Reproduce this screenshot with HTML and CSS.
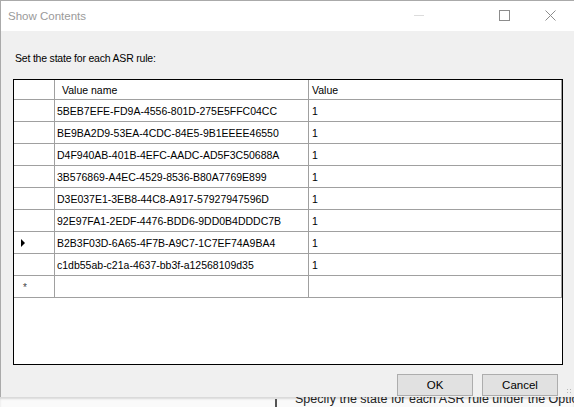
FILE: index.html
```html
<!DOCTYPE html>
<html>
  <head>
    <title>Show Contents</title>
    <meta name="viewport" content="width=device-width, initial-scale=1" />
    <link rel="stylesheet" href="styles.css">
  </head>
  <body>
    <div class="window">
      <div class="titlebar">
        <span class="title">Show Contents</span>
        <div class="controls">
          <span class="ctl minimize"></span>
          <svg class="ctl" width="11" height="11" viewBox="0 0 11 11">
            <rect x="0.5" y="0.5" width="10" height="10" fill="none" stroke="#8c8c8c" />
          </svg>
          <svg class="ctl" width="11" height="11" viewBox="0 0 11 11">
            <path d="M0.5 0.5 L10.5 10.5 M10.5 0.5 L0.5 10.5" stroke="#8c8c8c" stroke-width="1" />
          </svg>
        </div>
      </div>
      <div class="client">
        <p class="prompt">Set the state for each ASR rule:</p>
        <div class="grid">
          <div class="row head">
            <div class="cell rowhead"></div>
            <div class="cell">Value name</div>
            <div class="cell">Value</div>
          </div>
          <div id="rows"></div>
          <div class="row">
            <div class="cell rowhead"><span class="newmark">*</span></div>
            <div class="cell"></div>
            <div class="cell"></div>
          </div>
        </div>
        <div class="buttons">
          <button type="button">OK</button>
          <button type="button">Cancel</button>
        </div>
        <div class="grip"></div>
      </div>
    </div>
    <div class="behind">
      <span class="check"></span>
      <span class="behind-text">Specify the state for each ASR rule under the Options</span>
    </div>
    <script>
      const rules = [
        "5BEB7EFE-FD9A-4556-801D-275E5FFC04CC",
        "BE9BA2D9-53EA-4CDC-84E5-9B1EEEE46550",
        "D4F940AB-401B-4EFC-AADC-AD5F3C50688A",
        "3B576869-A4EC-4529-8536-B80A7769E899",
        "D3E037E1-3EB8-44C8-A917-57927947596D",
        "92E97FA1-2EDF-4476-BDD6-9DD0B4DDDC7B",
        "B2B3F03D-6A65-4F7B-A9C7-1C7EF74A9BA4",
        "c1db55ab-c21a-4637-bb3f-a12568109d35",
      ];
      const current = 6;

      const rows = document.querySelector("#rows");

      rules.forEach((name, i) => {
        const row = document.createElement("div");
        row.className = "row";

        const head = document.createElement("div");
        head.className = "cell rowhead";
        if (i === current) {
          const arrow = document.createElement("span");
          arrow.className = "arrow";
          head.append(arrow);
        }

        const nameCol = document.createElement("div");
        nameCol.className = "cell";
        nameCol.textContent = name;

        const valueCol = document.createElement("div");
        valueCol.className = "cell";
        valueCol.textContent = "1";

        row.append(head, nameCol, valueCol);
        rows.append(row);
      });
    </script>
  </body>
</html>
```

FILE: styles.css
```css
body {
  margin: 0;
  width: 574px;
  height: 407px;
  overflow: hidden;
  background: #f0f0f0;
  font-family: "Liberation Sans", Arial, sans-serif;
  font-size: 10.5px;
  color: #000;
}

.window {
  width: 600px;
  height: 397px;
  box-sizing: border-box;
  border-top: 1px solid #aaaaaa;
  border-left: 1px solid #aaaaaa;
  display: flex;
  flex-direction: column;
  background: #f0f0f0;
}

.titlebar {
  height: 30px;
  flex: none;
  background: #fff;
  display: flex;
  align-items: center;
}

.title {
  margin-left: 7px;
  margin-top: -1px;
  color: #9a9a9a;
  font-size: 11.5px;
}

.controls {
  margin-left: auto;
  width: 186px;
  display: flex;
  align-items: center;
  margin-top: -1px;
}

.ctl {
  display: block;
}

.minimize {
  width: 10px;
  height: 1px;
  background: #dcdcdc;
  margin-right: 75px;
}

.controls svg + svg {
  margin-left: 35px;
}

.client {
  flex: 1;
  position: relative;
  padding-left: 12px;
}

.prompt {
  margin: 21px 0 14px 2px;
  line-height: 13px;
  letter-spacing: -0.2px;
}

.grid {
  width: 550px;
  height: 286px;
  box-sizing: border-box;
  border: 1px solid #000;
  background: #fff;
}

.row {
  display: grid;
  grid-template-columns: 41px 254px 253px;
  height: 22px;
}

.row.head {
  height: 20px;
}

.cell {
  box-sizing: border-box;
  border-right: 1px solid #a0a0a0;
  border-bottom: 1px solid #a0a0a0;
  padding-left: 2px;
  display: flex;
  align-items: center;
  white-space: nowrap;
  overflow: hidden;
}

.cell + .cell + .cell {
  padding-left: 3px;
}

.head .cell {
  padding-left: 7px;
}

.rowhead {
  position: relative;
}

.arrow {
  position: absolute;
  left: 7px;
  top: 7px;
  width: 0;
  height: 0;
  border-top: 4px solid transparent;
  border-bottom: 4px solid transparent;
  border-left: 4px solid #000;
}

.newmark {
  position: absolute;
  left: 9px;
  top: 6px;
  font-size: 10px;
  color: #444;
}

.buttons {
  display: flex;
  gap: 9px;
  margin: 9px 0 0 384px;
}

.buttons button {
  width: 76px;
  height: 22px;
  background: #e1e1e1;
  border: 1px solid #adadad;
  font-family: "Liberation Sans", Arial, sans-serif;
  font-size: 11.5px;
  color: #000;
  padding: 0;
}

.grip {
  position: absolute;
  left: 565px;
  bottom: 2px;
  width: 7px;
  height: 7px;
  background: radial-gradient(circle, #b8b8b8 0 1px, transparent 1px) 0 0 / 3px 3px;
}

.behind {
  height: 10px;
  background: #fafafa;
  box-shadow: inset 0 2px 2px #d8d8d8;
  display: flex;
  align-items: flex-start;
  padding-left: 275px;
  gap: 18px;
  overflow: hidden;
  white-space: nowrap;
  font-size: 12.5px;
  color: #222;
}

.check {
  width: 9px;
  height: 8px;
  margin-top: 2px;
  box-sizing: border-box;
  border: 1px solid #555;
  border-bottom: none;
}

.behind-text {
  line-height: 14px;
  margin-top: -5px;
}
```
